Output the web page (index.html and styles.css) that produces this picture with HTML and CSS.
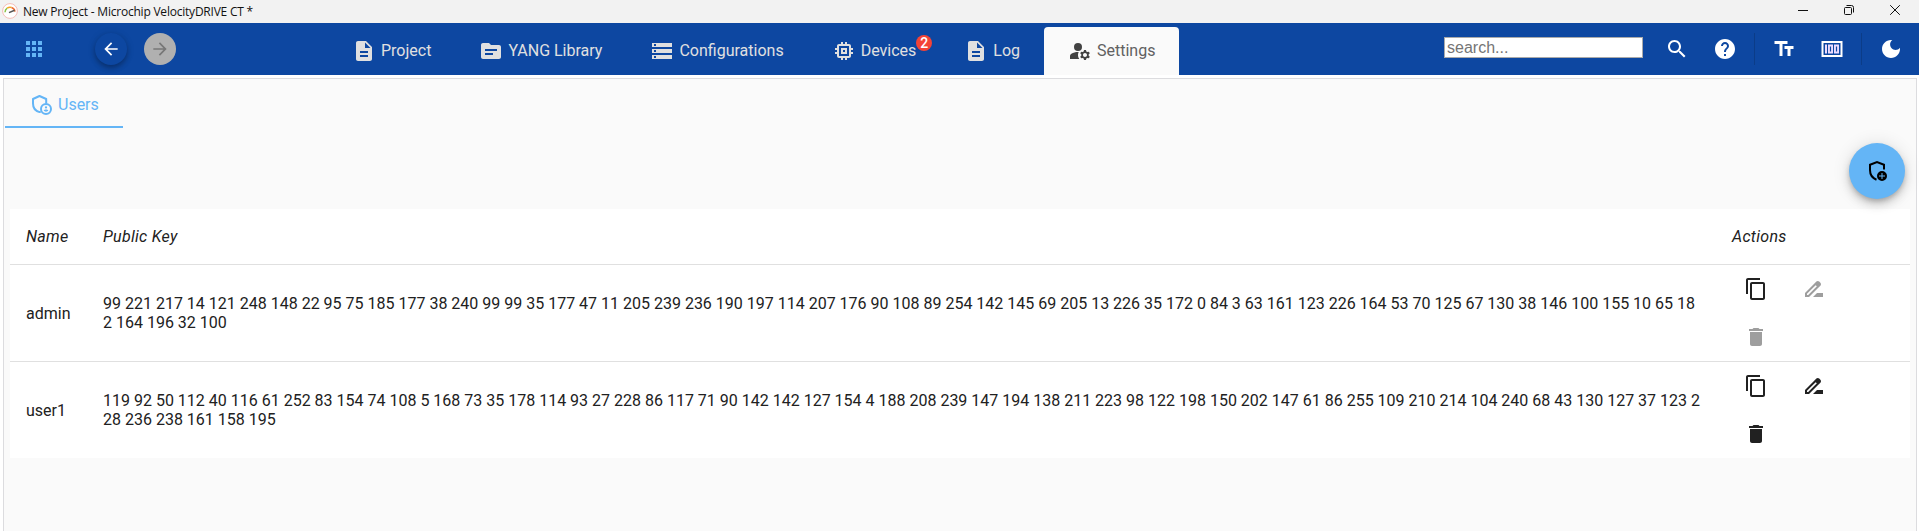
FILE: index.html
```html
<!DOCTYPE html>
<html lang="en">
<head>
<meta charset="utf-8">
<title>New Project - Microchip VelocityDRIVE CT *</title>
<link rel="stylesheet" href="styles.css">
</head>
<body>
<header class="titlebar">
  <svg class="app-icon" viewBox="0 0 16 16"><circle cx="8" cy="8" r="7.4" fill="#fff" stroke="#f3b5b0" stroke-width=".9"/><path d="M3 9.2a5 5 0 0 1 2.2-4" fill="none" stroke="#8bc34a" stroke-width="1.5"/><path d="M5.2 5.2a5 5 0 0 1 4.3-.7" fill="none" stroke="#f5a623" stroke-width="1.5"/><path d="M9.5 4.5A5 5 0 0 1 13 8.6" fill="none" stroke="#ef6c35" stroke-width="1.5"/><path d="M7 9.6l5.6-2.4" stroke="#555" stroke-width="1.5"/></svg>
  <span class="title">New Project - Microchip VelocityDRIVE CT *</span>
  <div class="window-controls">
    <svg viewBox="0 0 10 10"><path d="M0 5.5h10"/></svg>
    <svg viewBox="0 0 10 10"><rect x=".5" y="2.5" width="7" height="7" rx="1"/><path d="M2.5.5H7.5a2 2 0 0 1 2 2V7.5"/></svg>
    <svg viewBox="0 0 10 10"><path d="M.2.2l9.6 9.6M9.8.2L.2 9.8"/></svg>
  </div>
</header>

<nav class="toolbar">
  <button class="apps"><svg class="icon" viewBox="0 0 24 24"><path d="M4 8h4V4H4v4zm6 12h4v-4h-4v4zm-6 0h4v-4H4v4zm0-6h4v-4H4v4zm6 0h4v-4h-4v4zm6-10v4h4V4h-4zm-6 4h4V4h-4v4zm6 6h4v-4h-4v4zm0 6h4v-4h-4v4z"/></svg></button>
  <button class="round back"><svg viewBox="0 0 24 24"><path d="M20 11H7.83l5.59-5.59L12 4l-8 8 8 8 1.41-1.41L7.83 13H20v-2z"/></svg></button>
  <button class="round forward"><svg viewBox="0 0 24 24"><path d="M12 4l-1.41 1.41L16.17 11H4v2h12.17l-5.58 5.59L12 20l8-8z"/></svg></button>

  <div class="tabs">
    <a class="tab project"><svg class="icon" viewBox="0 0 24 24"><path d="M14 2H6c-1.1 0-1.99.9-1.99 2L4 20c0 1.1.89 2 1.99 2H18c1.1 0 2-.9 2-2V8l-6-6zm2 16H8v-2h8v2zm0-4H8v-2h8v2zm-3-5V3.5L18.5 9H13z"/></svg><span>Project</span></a>
    <a class="tab library"><svg class="icon" viewBox="0 0 24 24"><path d="M20 6h-8l-2-2H4c-1.1 0-1.99.9-1.99 2L2 18c0 1.1.9 2 2 2h16c1.1 0 2-.9 2-2V8c0-1.1-.9-2-2-2zm-6 10H6v-2h8v2zm4-4H6v-2h12v2z"/></svg><span>YANG Library</span></a>
    <a class="tab configurations"><svg class="icon" viewBox="0 0 24 24"><path d="M2 20h20v-4H2v4zm2-3h2v2H4v-2zM2 4v4h20V4H2zm4 3H4V5h2v2zm-4 7h20v-4H2v4zm2-3h2v2H4v-2z"/></svg><span>Configurations</span></a>
    <a class="tab devices"><svg class="icon" viewBox="0 0 24 24"><path d="M15 9H9v6h6V9zm-2 4h-2v-2h2v2zm8-2V9h-2V7c0-1.100-.9-2-2-2h-2V3h-2v2h-2V3H9v2H7c-1.100 0-2 .9-2 2v2H3v2h2v2H3v2h2v2c0 1.100.9 2 2 2h2v2h2v-2h2v2h2v-2h2c1.100 0 2-.9 2-2v-2h2v-2h-2v-2h2zm-4 6H7V7h10v10z"/></svg><span>Devices</span><b class="badge">2</b></a>
    <a class="tab log"><svg class="icon" viewBox="0 0 24 24"><path d="M14 2H6c-1.1 0-1.99.9-1.99 2L4 20c0 1.1.89 2 1.99 2H18c1.1 0 2-.9 2-2V8l-6-6zm2 16H8v-2h8v2zm0-4H8v-2h8v2zm-3-5V3.500L18.500 9H13z"/></svg><span>Log</span></a>
    <a class="tab settings active"><svg class="icon" viewBox="0 0 24 24"><circle cx="10" cy="8" r="4"/><path d="M10.670 13.020C10.450 13.010 10.230 13 10 13c-2.420 0-4.680.67-6.610 1.820C2.510 15.340 2 16.320 2 17.350V20h9.260C10.470 18.870 10 17.490 10 16c0-1.070.25-2.070.67-2.980zM20.750 16c0-.22-.03-.42-.06-.63l1.140-1.010-1-1.730-1.450.49c-.32-.27-.68-.48-1.080-.63L18 11h-2l-.3 1.490c-.4.15-.76.36-1.080.63l-1.450-.49-1 1.730 1.140 1.010c-.03.21-.06.41-.06.63s.03.42.06.63l-1.140 1.010 1 1.730 1.450-.49c.32.27.68.48 1.080.63L16 21h2l.3-1.490c.4-.15.76-.36 1.080-.63l1.450.49 1-1.730-1.140-1.010c.03-.21.06-.41.06-.63zM17 18c-1.100 0-2-.9-2-2s.9-2 2-2 2 .9 2 2-.9 2-2 2z"/></svg><span>Settings</span></a>
  </div>

  <div class="tools">
    <input class="search" type="text" placeholder="search...">
    <button class="tool find"><svg class="icon" viewBox="0 0 24 24"><path d="M15.500 14h-.79l-.28-.27C15.410 12.590 16 11.110 16 9.500 16 5.910 13.090 3 9.500 3S3 5.910 3 9.500 5.910 16 9.500 16c1.610 0 3.090-.59 4.230-1.570l.27.28v.79l5 4.990L20.490 19l-4.990-5zm-6 0C7.010 14 5 11.990 5 9.500S7.010 5 9.500 5 14 7.010 14 9.500 11.990 14 9.500 14z"/></svg></button>
    <button class="tool help"><svg class="icon" viewBox="0 0 24 24"><path d="M12 2C6.480 2 2 6.480 2 12s4.480 10 10 10 10-4.480 10-10S17.520 2 12 2zm1 17h-2v-2h2v2zm2.070-7.750l-.9.92C13.450 12.900 13 13.500 13 15h-2v-.5c0-1.100.45-2.100 1.170-2.830l1.240-1.260c.37-.36.59-.86.59-1.410 0-1.100-.9-2-2-2s-2 .9-2 2H8c0-2.210 1.790-4 4-4s4 1.790 4 4c0 .88-.36 1.680-.93 2.250z"/></svg></button>
    <i class="divider"></i>
    <button class="tool"><svg class="icon" viewBox="0 0 24 24"><path d="M2.500 4v3h5v12h3V7h5V4h-13zm19 5h-9v3h3v7h3v-7h3V9z"/></svg></button>
    <button class="tool money"><svg class="icon" viewBox="0 0 24 24"><path fill-rule="evenodd" d="M1.500 4h21v16h-21zM3.500 6v12h17V6z"/><path fill="#ecdcff" fill-rule="evenodd" d="M5 7.500h2v9H5zM8 7.500h5v9H8zm1.900 2v5h1.200v-5zM14 7.500h5v9h-5zm1.900 2v5h1.200v-5z"/></svg></button>
    <i class="divider"></i>
    <button class="tool moon"><svg class="icon" viewBox="0 0 24 24"><path d="M12 3c-4.970 0-9 4.030-9 9s4.030 9 9 9 9-4.030 9-9c0-.46-.04-.92-.1-1.360-.98 1.370-2.580 2.260-4.400 2.260-2.980 0-5.400-2.420-5.400-5.400 0-1.810.89-3.420 2.260-4.400-.44-.06-.9-.1-1.360-.1z"/></svg></button>
  </div>
</nav>

<main class="panel">
  <div class="subtabs">
    <a class="subtab"><svg class="icon" viewBox="0 0 24 24"><path d="M17.200 11.500V7L10.500 4 4 7v4.500c0 4 2.600 7.500 6.500 8.600.5-.1.900-.2 1.300-.4" fill="none" stroke="currentColor" stroke-width="2" stroke-linejoin="round"/><circle cx="17" cy="17" r="5" fill="none" stroke="currentColor" stroke-width="2"/><circle cx="17" cy="15.380" r="1.120"/><path d="M17 17.500c-.73 0-2.190.36-2.240 1.080.5.710 1.320 1.170 2.240 1.170s1.740-.46 2.240-1.170c-.05-.72-1.510-1.080-2.240-1.080z"/></svg><span>Users</span></a>
  </div>
  <div class="actions-bar">
    <button class="fab"><svg class="icon" viewBox="0 0 24 24"><path d="M19 10.500V5.700L12 3 5 5.700v5.400c0 4.300 2.700 8.200 6.500 9.700" fill="none" stroke="currentColor" stroke-width="2"/><path fill-rule="evenodd" d="M17 12a5 5 0 1 0 0 10 5 5 0 0 0 0-10zm3 5.500h-2.500V20h-1v-2.500H14v-1h2.500V14h1v2.500H20z"/></svg></button>
  </div>
  <table class="users">
    <thead><tr><th class="name">Name</th><th class="key">Public Key</th><th class="actions">Actions</th></tr></thead>
    <tbody>
      <tr>
        <td>admin</td>
        <td class="key">99 221 217 14 121 248 148 22 95 75 185 177 38 240 99 99 35 177 47 11 205 239 236 190 197 114 207 176 90 108 89 254 142 145 69 205 13 226 35 172 0 84 3 63 161 123 226 164 53 70 125 67 130 38 146 100 155 10 65 182 164 196 32 100</td>
        <td><div class="row-actions">
          <button><svg class="icon" viewBox="0 0 24 24"><path d="M16 1H4c-1.100 0-2 .9-2 2v14h2V3h12V1zm3 4H8c-1.100 0-2 .9-2 2v14c0 1.100.9 2 2 2h11c1.100 0 2-.9 2-2V7c0-1.100-.9-2-2-2zm0 16H8V7h11v14z"/></svg></button>
          <button class="disabled"><svg class="icon" viewBox="0 0 24 24"><path d="M18.410 5.800L17.200 4.590c-.78-.78-2.050-.78-2.830 0l-2.680 2.680L3 15.960V20h4.040l8.740-8.740 2.630-2.630c.79-.78.79-2.050 0-2.830zM6.210 18H5v-1.210l8.660-8.660 1.210 1.210L6.210 18zM11 20l4-4h6v4H11z"/></svg></button>
          <button class="disabled"><svg class="icon" viewBox="0 0 24 24"><path d="M6 19c0 1.100.9 2 2 2h8c1.100 0 2-.9 2-2V7H6v12zM19 4h-3.500l-1-1h-5l-1 1H5v2h14V4z"/></svg></button>
        </div></td>
      </tr>
      <tr>
        <td>user1</td>
        <td class="key">119 92 50 112 40 116 61 252 83 154 74 108 5 168 73 35 178 114 93 27 228 86 117 71 90 142 142 127 154 4 188 208 239 147 194 138 211 223 98 122 198 150 202 147 61 86 255 109 210 214 104 240 68 43 130 127 37 123 228 236 238 161 158 195</td>
        <td><div class="row-actions">
          <button><svg class="icon" viewBox="0 0 24 24"><path d="M16 1H4c-1.100 0-2 .9-2 2v14h2V3h12V1zm3 4H8c-1.100 0-2 .9-2 2v14c0 1.100.9 2 2 2h11c1.100 0 2-.9 2-2V7c0-1.100-.9-2-2-2zm0 16H8V7h11v14z"/></svg></button>
          <button><svg class="icon" viewBox="0 0 24 24"><path d="M18.410 5.800L17.200 4.590c-.78-.78-2.050-.78-2.830 0l-2.680 2.680L3 15.960V20h4.040l8.740-8.740 2.630-2.630c.79-.78.79-2.050 0-2.830zM6.210 18H5v-1.210l8.660-8.660 1.210 1.210L6.210 18zM11 20l4-4h6v4H11z"/></svg></button>
          <button><svg class="icon" viewBox="0 0 24 24"><path d="M6 19c0 1.100.9 2 2 2h8c1.100 0 2-.9 2-2V7H6v12zM19 4h-3.500l-1-1h-5l-1 1H5v2h14V4z"/></svg></button>
        </div></td>
      </tr>
    </tbody>
  </table>
</main>
</body>
</html>
```
FILE: styles.css
```css
* { box-sizing: border-box; }
body { margin: 0; height: 531px; overflow: hidden; background: #fff; font-family: Roboto, sans-serif; font-size: 16px; color: #212121; display: flex; flex-direction: column; }
button { border: 0; padding: 0; background: none; color: inherit; display: flex; align-items: center; justify-content: center; flex: none; }
svg { display: block; fill: currentColor; flex: none; }
.icon { width: 24px; height: 24px; }

.titlebar { height: 23px; background: #f2f2f2; display: flex; align-items: center; padding: 0 19px 0 2px; color: #111; flex: none; }
.app-icon { width: 16px; height: 16px; margin-top: -1px; }
.title { font: 12px/23px "Open Sans", sans-serif; letter-spacing: -.22px; margin-left: 5px; white-space: nowrap; }
.window-controls { display: flex; gap: 36px; margin-left: auto; margin-top: -3px; }
.window-controls svg { width: 10px; height: 10px; fill: none; stroke: #111; stroke-width: 1; }

.toolbar { height: 52px; background: #0d47a1; color: #e0e0e0; display: flex; flex: none; }
.apps { color: #64b5f6; margin-left: 22px; width: 24px; }
.round { width: 32px; height: 32px; border-radius: 50%; margin-top: 10px; }
.round svg { width: 20px; height: 20px; }
.back { margin-left: 49px; color: #fff; box-shadow: 0 3px 5px rgba(0,0,0,.25), 0 1px 8px rgba(0,0,0,.12); }
.forward { margin-left: 17px; background: #b0b0b0; color: #777; }

.tabs { display: flex; margin-left: 152px; padding-top: 4px; }
.tab { position: relative; display: flex; align-items: center; height: 48px; padding: 0 24px; gap: 5px; white-space: nowrap; }
.tab span { padding-bottom: 2px; }
.tab.active { background: #fafafa; color: #424242; border-radius: 4px 4px 0 0; }
.tab.active span { color: #616161; }
.badge { position: absolute; top: 8px; right: 8px; width: 16px; height: 16px; border-radius: 50%; background: #f44336; color: #fff; font: 500 14px/16px Roboto, sans-serif; text-align: center; }

.tools { display: flex; align-items: center; margin-left: auto; padding-right: 16px; color: #fff; }
.search { width: 199px; height: 21px; border: 1px solid #aaa; padding: 0 2px; margin: -3px 22px 0 0; font: 16px/18px "Liberation Sans", Arial, sans-serif; background: #fff; }
.search::placeholder { color: #757575; opacity: 1; }
.help { margin-left: 24px; }
.divider { width: 1px; height: 32px; background: #0b3c88; margin: 0 17px; }
.money { margin-left: 24px; }

.panel { flex: 1; margin: 3px 2px 0 3px; border: 1px solid #dcdcdf; border-bottom: 0; background: #fafafa; padding: 0 6px; min-height: 0; }
.subtabs { display: flex; margin-left: -5px; }
.subtab { width: 118px; height: 49px; padding: 3px 0 0 24px; border-bottom: 2px solid #64b5f6; color: #64b5f6; display: flex; align-items: center; gap: 5px; }
.actions-bar { display: flex; justify-content: flex-end; padding: 15px 5px 10px 0; height: 81px; }
.fab { width: 56px; height: 56px; border-radius: 50%; background: #64b5f6; color: #000; box-shadow: 0 3px 5px -1px rgba(0,0,0,.2), 0 6px 10px rgba(0,0,0,.14), 0 1px 18px rgba(0,0,0,.12); }

.users { width: 1900px; table-layout: fixed; border-collapse: separate; border-spacing: 0; background: #fff; }
.users th { height: 56px; font-weight: 400; font-style: italic; text-align: left; letter-spacing: .3px; }
.users th, .users td { padding: 0 0 0 16px; border-bottom: 1px solid #e0e0e0; vertical-align: middle; }
.users tr:last-child td { border-bottom: 0; }
.users thead tr:last-child th { border-bottom: 1px solid #e0e0e0; }
.users .name { width: 77px; }
.users .key { word-break: break-all; padding-right: 16px; line-height: 19px; }
.users .actions { width: 194px; }
.row-actions { display: flex; flex-wrap: wrap; width: 162px; column-gap: 10px; }
.row-actions button { width: 48px; height: 48px; }
.disabled { color: #9e9e9e; }
```
